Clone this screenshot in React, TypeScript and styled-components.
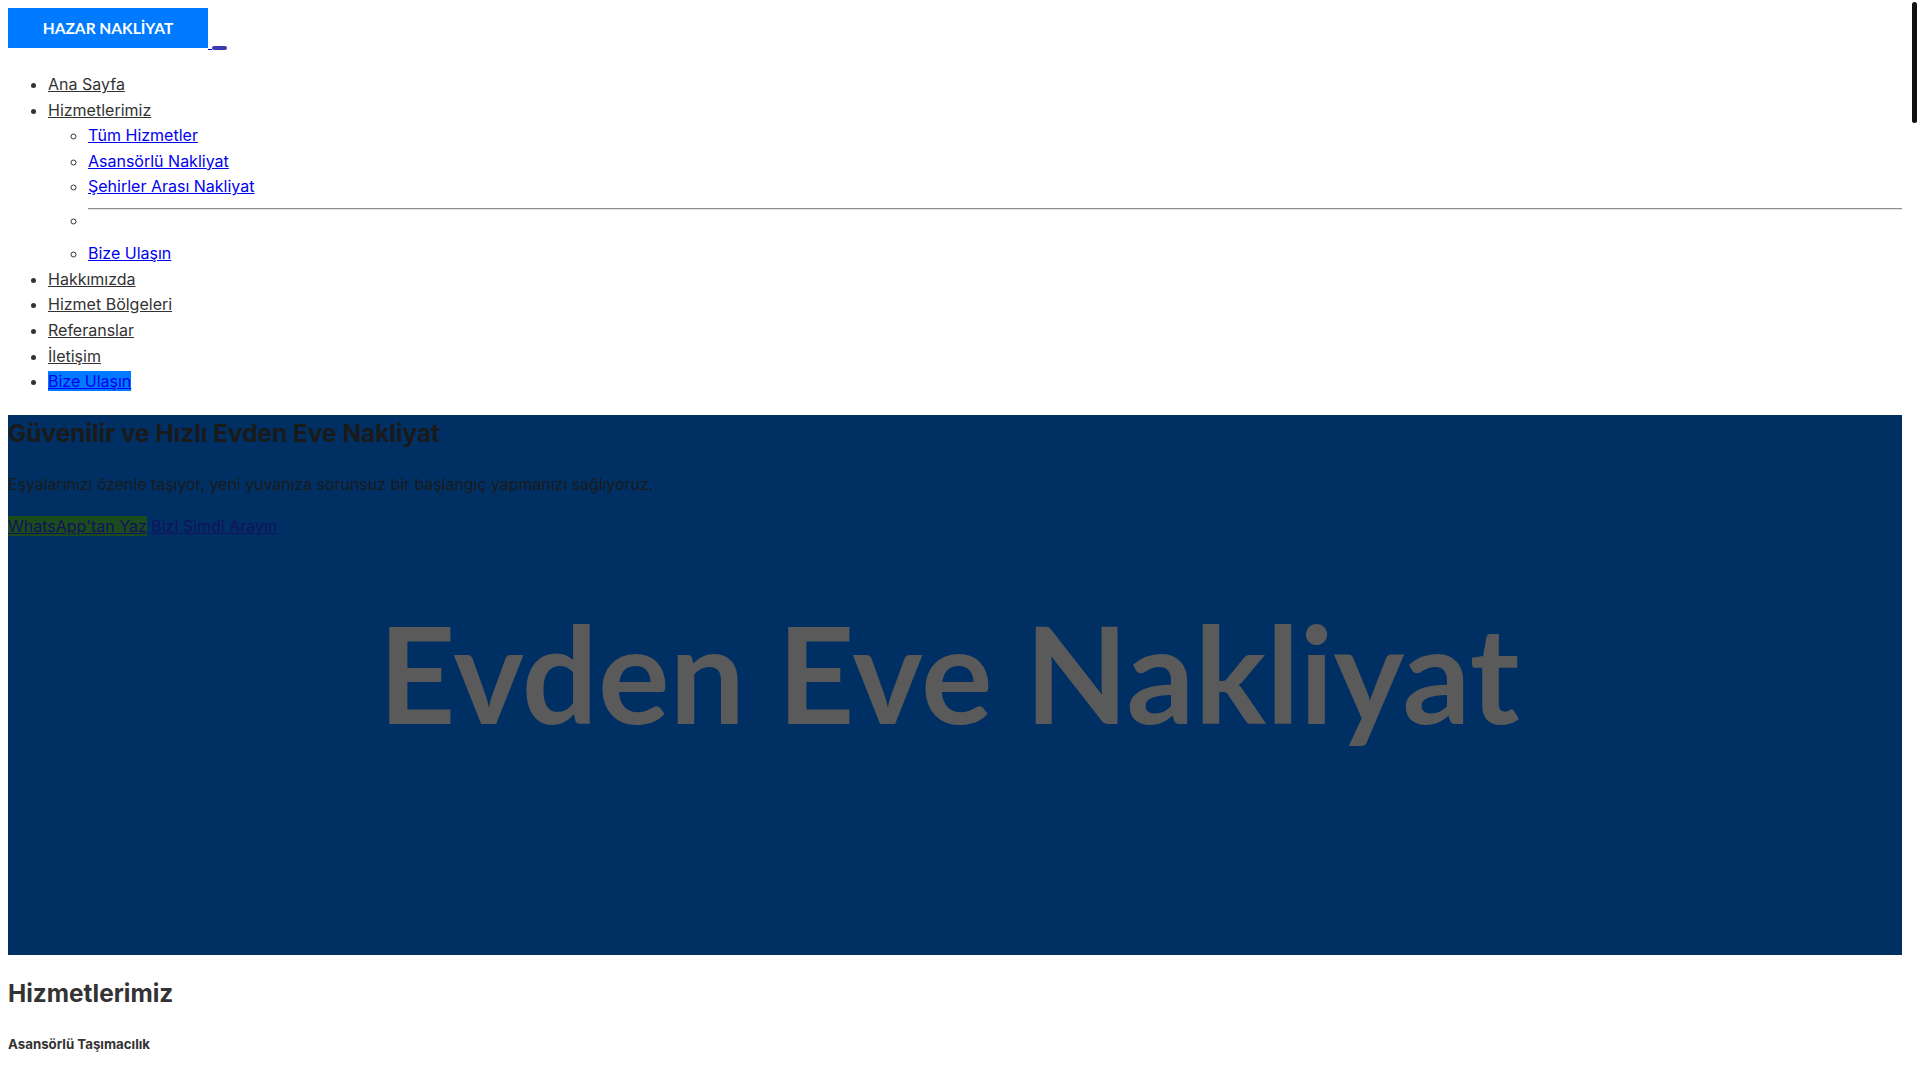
import React from "react";
import styled, { createGlobalStyle } from "styled-components";

const GlobalStyle = createGlobalStyle`
  html {
    background: #fff;
  }
  body {
    margin: 8px 18px 8px 8px;
    font-family: Inter, "Noto Sans", sans-serif;
    font-size: 16px;
    line-height: 1.6;
    color: #333;
  }
`;

const ScrollThumb = styled.div`
  position: fixed;
  top: 2px;
  right: 3px;
  width: 5px;
  height: 121px;
  border-radius: 3px;
  background: #111;
`;

const Header = styled.header`
  display: flex;
  align-items: flex-start;
  height: 48px;
`;

const Brand = styled.a`
  display: flex;
  align-items: center;
  justify-content: center;
  width: 200px;
  height: 40px;
  background: #007bff;
  color: #fff;
  font-family: Lato, "Liberation Sans", sans-serif;
  font-weight: 700;
  font-size: 15.5px;
  text-decoration: none;
`;

const LinkGap = styled.span`
  width: 4px;
  height: 1px;
  margin-top: 41px;
  background: #0000ee;
`;

const Toggler = styled.button`
  width: 15px;
  height: 4px;
  margin-top: 38px;
  padding: 0;
  border: 0;
  border-radius: 2px;
  background: #3b3bb0;
`;

const MenuList = styled.ul`
  margin: 16px 0;
  padding-left: 40px;
  list-style: disc;
`;

const MenuItem = styled.li``;

const MenuLink = styled.a`
  color: #333;
  text-decoration: underline;
`;

const CtaLink = styled.a`
  color: #0000ee;
  background: #007bff;
  text-decoration: underline;
`;

const SubList = styled.ul`
  margin: 0;
  padding-left: 40px;
  list-style: circle;
`;

const SubLink = styled.a`
  color: #0000ee;
  text-decoration: underline;
`;

const DividerItem = styled.li`
  list-style: none;
  padding-bottom: 7.2px;
`;

const Rule = styled.hr`
  height: 0;
  margin: 8.5px 0 -2px;
  border: 0;
  border-top: 1px solid #8f8f8f;
  border-bottom: 1px solid #e2e2e2;
`;

const EmptyLine = styled.div`
  display: list-item;
  list-style: circle;
  height: 25.6px;
`;

const Hero = styled.section`
  position: relative;
  margin-top: 20.5px;
  height: 540px;
  background: #003063;
  overflow: hidden;
`;

const Backdrop = styled.div`
  position: absolute;
  top: 191px;
  left: 0;
  right: 0;
  padding-right: 12px;
  text-align: center;
  font-family: Lato, "Liberation Sans", sans-serif;
  font-weight: 700;
  font-size: 134px;
  line-height: 1;
  color: #5a5a5a;
  white-space: nowrap;
  pointer-events: none;
`;

const HeroBody = styled.div`
  position: relative;
`;

const HeroTitle = styled.h1`
  margin: 0 0 19px;
  font-size: 24.4px;
  line-height: 1.55;
  font-weight: 700;
  color: #1a1a1a;
`;

const HeroText = styled.p`
  margin: 0 0 16px;
  font-size: 15.9px;
  line-height: 25.6px;
  color: #1a1a1a;
`;

const Actions = styled.div`
  margin: 0;
`;

const WhatsLink = styled.a`
  color: #12125e;
  background: #1b4c1d;
  text-decoration: underline;
`;

const CallLink = styled.a`
  color: #12125e;
  text-decoration: underline;
`;

const SectionTitle = styled.h2`
  margin: 20.3px 0 22.5px;
  font-size: 24.4px;
  line-height: 1.45;
  font-weight: 700;
  color: #333;
`;

const ServiceTitle = styled.h5`
  margin: 23px 0;
  font-size: 13.28px;
  font-weight: 700;
  color: #333;
`;

export default function App() {
  return (
    <div>
      <GlobalStyle />
      <ScrollThumb aria-hidden="true" />
      <Header>
        <Brand href="#">HAZAR NAKLİYAT</Brand>
        <LinkGap />
        <Toggler aria-label="Menü" />
      </Header>

      <nav>
        <MenuList>
          <MenuItem>
            <MenuLink href="#">Ana Sayfa</MenuLink>
          </MenuItem>
          <MenuItem>
            <MenuLink href="#">Hizmetlerimiz</MenuLink>
            <SubList>
              <li>
                <SubLink href="#">Tüm Hizmetler</SubLink>
              </li>
              <li>
                <SubLink href="#">Asansörlü Nakliyat</SubLink>
              </li>
              <li>
                <SubLink href="#">Şehirler Arası Nakliyat</SubLink>
              </li>
              <DividerItem>
                <Rule />
                <EmptyLine />
              </DividerItem>
              <li>
                <SubLink href="#">Bize Ulaşın</SubLink>
              </li>
            </SubList>
          </MenuItem>
          <MenuItem>
            <MenuLink href="#">Hakkımızda</MenuLink>
          </MenuItem>
          <MenuItem>
            <MenuLink href="#">Hizmet Bölgeleri</MenuLink>
          </MenuItem>
          <MenuItem>
            <MenuLink href="#">Referanslar</MenuLink>
          </MenuItem>
          <MenuItem>
            <MenuLink href="#">İletişim</MenuLink>
          </MenuItem>
          <MenuItem>
            <CtaLink href="#">Bize Ulaşın</CtaLink>
          </MenuItem>
        </MenuList>
      </nav>

      <Hero>
        <Backdrop aria-hidden="true">Evden Eve Nakliyat</Backdrop>
        <HeroBody>
          <HeroTitle>Güvenilir ve Hızlı Evden Eve Nakliyat</HeroTitle>
          <HeroText>
            Eşyalarınızı özenle taşıyor, yeni yuvanıza sorunsuz bir başlangıç
            yapmanızı sağlıyoruz.
          </HeroText>
          <Actions>
            <WhatsLink href="#">WhatsApp'tan Yaz</WhatsLink>{" "}
            <CallLink href="#">Bizi Şimdi Arayın</CallLink>
          </Actions>
        </HeroBody>
      </Hero>

      <section>
        <SectionTitle>Hizmetlerimiz</SectionTitle>
        <ServiceTitle>Asansörlü Taşımacılık</ServiceTitle>
      </section>
    </div>
  );
}
